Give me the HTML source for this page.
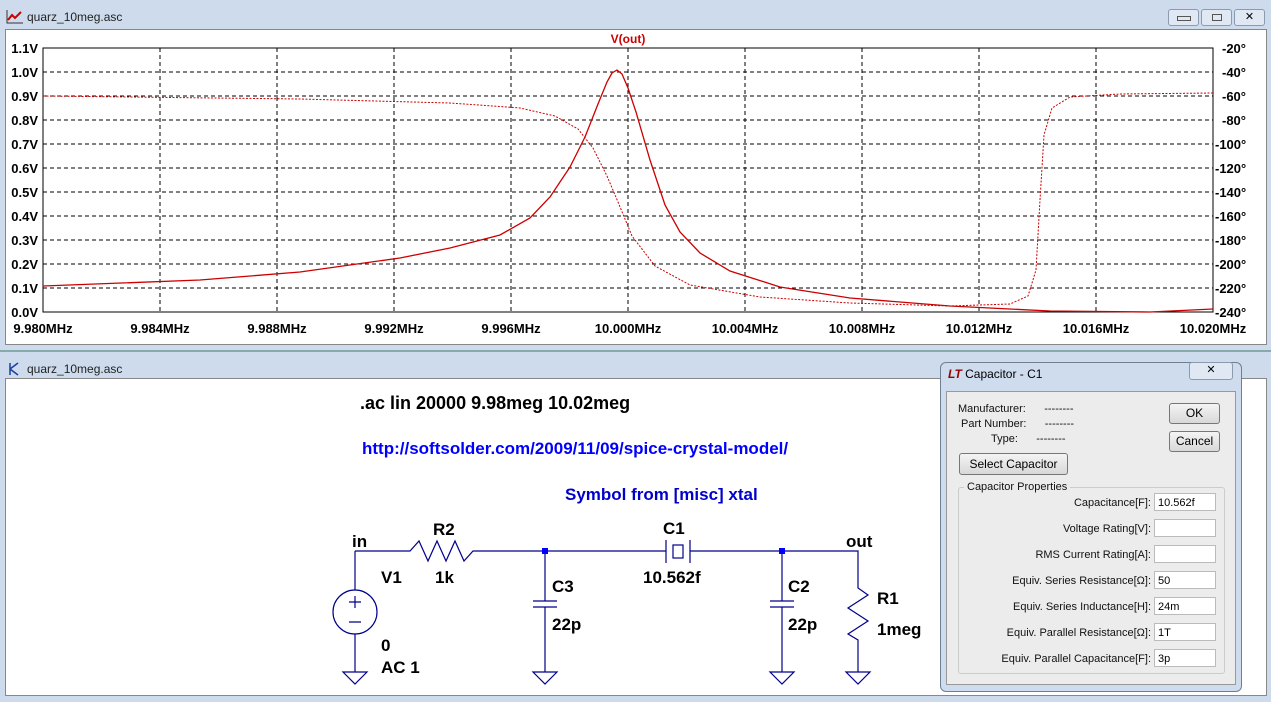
<!DOCTYPE html>
<html><head><meta charset="utf-8"><style>
body{margin:0;width:1271px;height:700px;overflow:hidden;background:#c9d7e8;font-family:"Liberation Sans",sans-serif;position:relative}
.abs{position:absolute}
.tb{font-size:12px;color:#222}
.btn{position:absolute;background:linear-gradient(#f4f4f4,#d8d8d8);border:1px solid #777;border-radius:3px;font-size:12px;text-align:center;color:#000}
.lbl{position:absolute;font-size:11px;color:#111;text-align:right;white-space:nowrap}
.in{position:absolute;left:1154px;width:62px;height:18px;background:#fff;border:1px solid #bbb;font-size:11px;line-height:18px;padding-left:3px;box-sizing:border-box}
</style></head><body>
<!-- top window -->
<div class="abs" style="left:0;top:0;width:1271px;height:350px;background:#cddbec"></div>
<svg class="abs" style="left:6px;top:9px" width="18" height="16"><path d="M1 1V14H17" stroke="#333" fill="none"/><path d="M2 11L6 6 9 9 15 3" stroke="#c00" stroke-width="2" fill="none"/></svg>
<div class="abs tb" style="left:27px;top:10px">quarz_10meg.asc</div>
<div class="btn" style="left:1168px;top:9px;width:29px;height:15px;background:#dfe8f3;border-color:#8a9bb0"><div style="margin:6px auto;width:12px;height:3px;border:1px solid #555"></div></div>
<div class="btn" style="left:1201px;top:9px;width:29px;height:15px;background:#dfe8f3;border-color:#8a9bb0"><div style="margin:4px auto;width:8px;height:5px;border:1px solid #555"></div></div>
<div class="btn" style="left:1234px;top:9px;width:29px;height:15px;background:#dfe8f3;border-color:#8a9bb0;font-size:11px;line-height:15px">✕</div>
<div class="abs" style="left:5px;top:29px;width:1260px;height:314px;background:#fff;border:1px solid #888"></div>
<svg class="abs" style="left:0;top:0" width="1271" height="350" font-family="Liberation Sans" font-weight="bold" font-size="13">
<g stroke="#000" stroke-dasharray="4,3" fill="none">
<path d="M160 48V312M277 48V312M394 48V312M511 48V312M628 48V312M745 48V312M862 48V312M979 48V312M1096 48V312"/>
<path d="M43 72H1213M43 96H1213M43 120H1213M43 144H1213M43 168H1213M43 192H1213M43 216H1213M43 240H1213M43 264H1213M43 288H1213"/>
</g>
<rect x="43" y="48" width="1170" height="264" fill="none" stroke="#000"/>
<g fill="#000" text-anchor="end">
<text x="38" y="53">1.1V</text><text x="38" y="77">1.0V</text><text x="38" y="101">0.9V</text><text x="38" y="125">0.8V</text><text x="38" y="149">0.7V</text><text x="38" y="173">0.6V</text><text x="38" y="197">0.5V</text><text x="38" y="221">0.4V</text><text x="38" y="245">0.3V</text><text x="38" y="269">0.2V</text><text x="38" y="293">0.1V</text><text x="38" y="317">0.0V</text>
</g>
<g fill="#000">
<text x="1222" y="53">-20°</text><text x="1222" y="77">-40°</text><text x="1222" y="101">-60°</text><text x="1222" y="125">-80°</text><text x="1215" y="149">-100°</text><text x="1215" y="173">-120°</text><text x="1215" y="197">-140°</text><text x="1215" y="221">-160°</text><text x="1215" y="245">-180°</text><text x="1215" y="269">-200°</text><text x="1215" y="293">-220°</text><text x="1215" y="317">-240°</text>
</g>
<g fill="#000" text-anchor="middle">
<text x="43" y="333">9.980MHz</text><text x="160" y="333">9.984MHz</text><text x="277" y="333">9.988MHz</text><text x="394" y="333">9.992MHz</text><text x="511" y="333">9.996MHz</text><text x="628" y="333">10.000MHz</text><text x="745" y="333">10.004MHz</text><text x="862" y="333">10.008MHz</text><text x="979" y="333">10.012MHz</text><text x="1096" y="333">10.016MHz</text><text x="1213" y="333">10.020MHz</text>
</g>
<text x="628" y="43" fill="#c00" font-size="12" text-anchor="middle">V(out)</text>
<path fill="none" stroke="#c00" stroke-width="1.3" d="M43 286L200 280 300 272 400 258 450 248 500 235 530 218 550 197 570 167 585 137 598 104 607 82 612 73 617 70 622 74 628 88 636 112 650 160 665 205 680 232 700 253 730 271 780 287 850 298 950 306 1050 311 1150 312 1213 309"/>
<path fill="none" stroke="#c00" stroke-width="1" stroke-dasharray="2,1.5" d="M43 96L300 99 450 103 520 108 555 116 578 129 593 148 607 176 618 202 632 236 655 266 690 285 760 297 850 303 950 306 1010 304 1028 296 1036 270 1040 200 1044 135 1052 108 1070 97 1120 94 1213 93"/>
</svg>
<!-- bottom window -->
<div class="abs" style="left:0;top:350px;width:1271px;height:350px;background:#cddbec;border-top:2px solid #8aa"></div>
<svg class="abs" style="left:6px;top:361px" width="16" height="16"><path d="M4 2V14M4 8L12 2M4 8L12 14" stroke="#1a3fa0" stroke-width="1.5" fill="none"/></svg>
<div class="abs tb" style="left:27px;top:362px">quarz_10meg.asc</div>
<div class="abs" style="left:5px;top:378px;width:1260px;height:316px;background:#fff;border:1px solid #888"></div>
<svg class="abs" style="left:0;top:350px" width="1271" height="350" font-family="Liberation Sans" font-weight="bold">
<g transform="translate(0,-350)">
<text x="360" y="409" font-size="18" fill="#000">.ac lin 20000 9.98meg 10.02meg</text>
<text x="362" y="454" font-size="17" fill="#00f">http://softsolder.com/2009/11/09/spice-crystal-model/</text>
<text x="565" y="500" font-size="17" fill="#00c">Symbol from [misc] xtal</text>
<g stroke="#00008b" stroke-width="1.2" fill="none">
<path d="M355 551H410L419 541 428 561 437 541 446 561 455 541 464 561 473 551H666M690 551H858V588L868 595 848 608 868 621 848 634 858 640V672"/>
<path d="M355 551V590M355 634V672M545 551V601M545 607V672M782 551V601M782 607V672"/>
<circle cx="355" cy="612" r="22"/>
<path d="M355 596V608M349 602H361M349 622H361"/>
<path d="M533 601H557M533 607H557M770 601H794M770 607H794"/>
<path d="M666 540V563M690 540V563"/><rect x="673" y="545" width="10" height="13"/>
<path d="M343 672H367L355 684ZM533 672H557L545 684ZM770 672H794L782 684ZM846 672H870L858 684Z"/>
</g>
<rect x="542" y="548" width="6" height="6" fill="#00f"/><rect x="779" y="548" width="6" height="6" fill="#00f"/>
<g fill="#000" font-size="17">
<text x="352" y="547">in</text><text x="433" y="535">R2</text><text x="435" y="583">1k</text><text x="381" y="583">V1</text><text x="381" y="651">0</text><text x="381" y="673">AC 1</text>
<text x="552" y="592">C3</text><text x="552" y="630">22p</text><text x="663" y="534">C1</text><text x="643" y="583">10.562f</text>
<text x="788" y="592">C2</text><text x="788" y="630">22p</text><text x="846" y="547">out</text><text x="877" y="604">R1</text><text x="877" y="635">1meg</text>
</g></g>
</svg>
<!-- dialog -->
<div class="abs" style="left:940px;top:362px;width:300px;height:328px;background:#cfdced;border:1px solid #6e7f95;border-radius:6px"></div>
<div class="abs" style="left:948px;top:367px;font-size:12px;color:#000"><span style="color:#900;font-weight:bold;font-style:italic">LT</span> Capacitor - C1</div>
<div class="btn" style="left:1189px;top:362px;width:42px;height:16px;background:#dfe8f3;border-color:#8a9bb0;font-size:11px">✕</div>
<div class="abs" style="left:946px;top:391px;width:288px;height:292px;background:#ececec;border:1px solid #999"></div>
<div class="lbl" style="left:958px;top:403px">Manufacturer: &nbsp;&nbsp;&nbsp;&nbsp; --------</div>
<div class="lbl" style="left:961px;top:418px">Part Number: &nbsp;&nbsp;&nbsp;&nbsp; --------</div>
<div class="lbl" style="left:991px;top:433px">Type: &nbsp;&nbsp;&nbsp;&nbsp; --------</div>
<div class="btn" style="left:1169px;top:403px;width:49px;height:19px;line-height:19px">OK</div>
<div class="btn" style="left:1169px;top:431px;width:49px;height:19px;line-height:19px">Cancel</div>
<div class="btn" style="left:959px;top:453px;width:107px;height:20px;line-height:20px">Select Capacitor</div>
<div class="abs" style="left:958px;top:487px;width:265px;height:185px;border:1px solid #ccc;border-radius:3px"></div>
<div class="lbl" style="left:964px;top:481px;background:#ececec;padding:0 3px">Capacitor Properties</div>
<div class="lbl" style="right:120px;top:497px">Capacitance[F]:</div><div class="in" style="top:493px">10.562f</div>
<div class="lbl" style="right:120px;top:523px">Voltage Rating[V]:</div><div class="in" style="top:519px"></div>
<div class="lbl" style="right:120px;top:549px">RMS Current Rating[A]:</div><div class="in" style="top:545px"></div>
<div class="lbl" style="right:120px;top:575px">Equiv. Series Resistance[Ω]:</div><div class="in" style="top:571px">50</div>
<div class="lbl" style="right:120px;top:601px">Equiv. Series Inductance[H]:</div><div class="in" style="top:597px">24m</div>
<div class="lbl" style="right:120px;top:627px">Equiv. Parallel Resistance[Ω]:</div><div class="in" style="top:623px">1T</div>
<div class="lbl" style="right:120px;top:653px">Equiv. Parallel Capacitance[F]:</div><div class="in" style="top:649px">3p</div>
</body></html>
